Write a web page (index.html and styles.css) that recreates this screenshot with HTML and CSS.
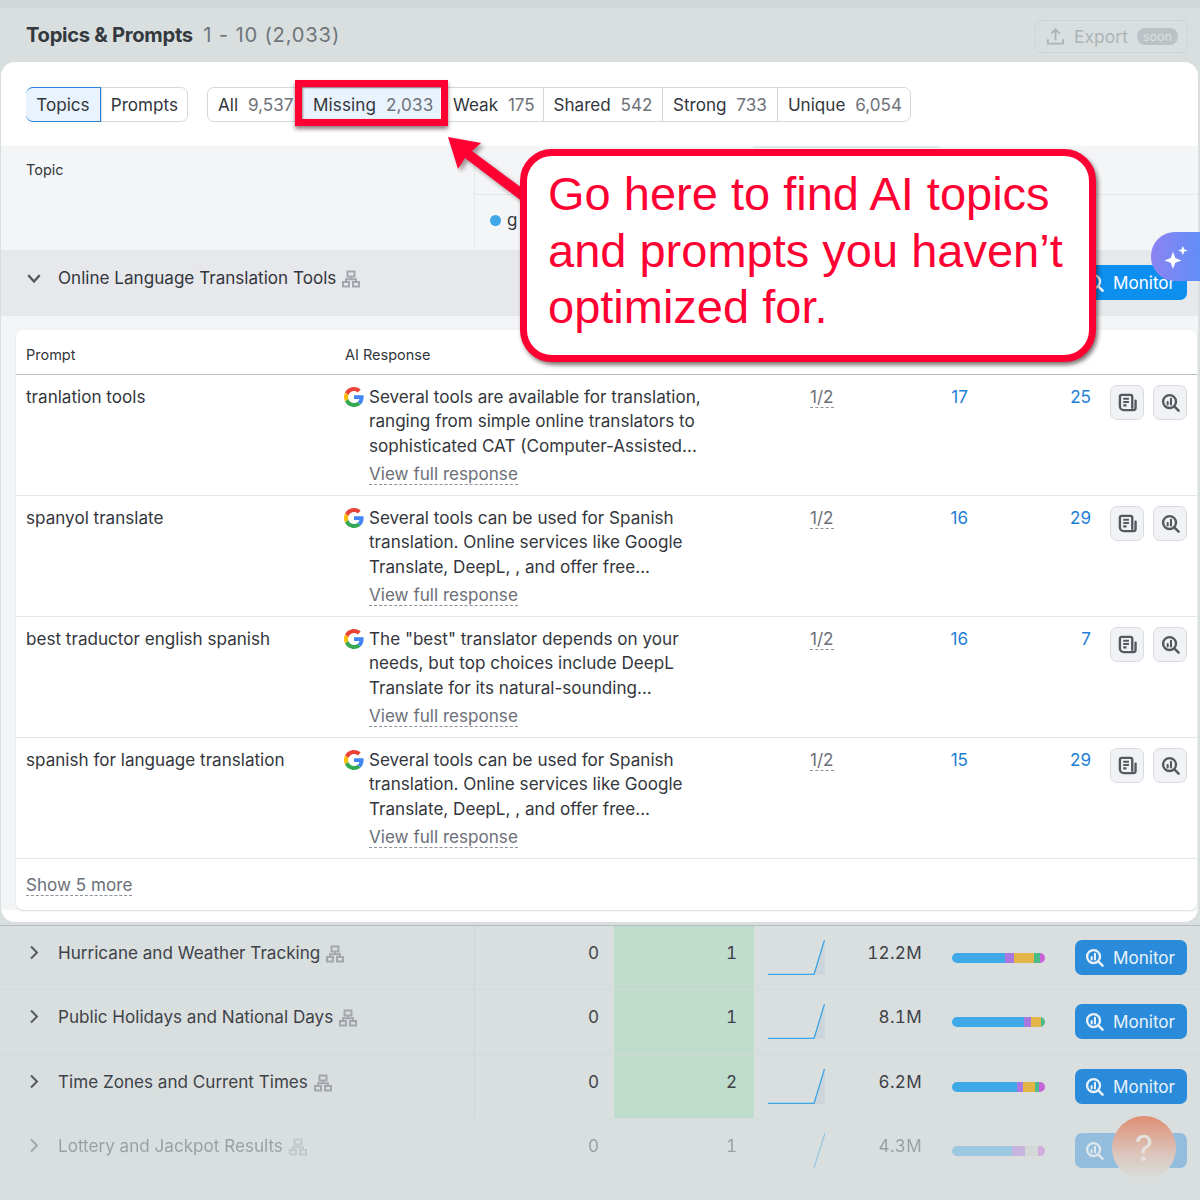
FILE: index.html
```html
<!DOCTYPE html>
<html lang="en">
<head>
<meta charset="utf-8">
<title>Topics &amp; Prompts</title>
<link rel="stylesheet" href="styles.css">
</head>
<body>
<svg class="defs" width="0" height="0" aria-hidden="true">
  <symbol id="tree" viewBox="0 0 18 18"><path d="M5.500 1.500h7v5h-7zM1 12h6v4.500H1zM11 12h6v4.500h-6zM4 12V9.300h10V12M9 6.500v2.800" fill="none" stroke="currentColor" stroke-width="2"/></symbol>
  <symbol id="mon" viewBox="0 0 20 20"><circle cx="9" cy="9" r="6.800" fill="none" stroke="currentColor" stroke-width="2.500"/><path d="M14 14l4.500 4.500" stroke="currentColor" stroke-width="2.600" stroke-linecap="round"/><path d="M7 9.500v2.500M10.500 6v6" stroke="currentColor" stroke-width="2.200" stroke-linecap="round"/></symbol>
  <symbol id="doc" viewBox="0 0 20 20"><path d="M15 15.500V4a2 2 0 0 0-2-2H4a2 2 0 0 0-2 2v10a4 4 0 0 0 4 4h10a2.500 2.500 0 0 0 2.500-2.500V8" fill="none" stroke="currentColor" stroke-width="2.500" stroke-linecap="round"/><path d="M5.500 6h6M5.500 9.500h6M5.500 13h3.500" stroke="currentColor" stroke-width="2.200"/></symbol>
  <symbol id="goog" viewBox="0 0 48 48"><path fill="#EA4335" d="M24 9.500c3.500 0 6.700 1.200 9.200 3.600l6.900-6.900C35.900 2.400 30.500 0 24 0 14.600 0 6.500 5.400 2.600 13.200l8 6.200C12.500 13.700 17.800 9.500 24 9.500z"/><path fill="#4285F4" d="M47 24.500c0-1.600-.1-3.100-.4-4.500H24v9h12.900c-.6 3-2.200 5.500-4.700 7.200l7.700 6C44.400 38 47 31.800 47 24.500z"/><path fill="#FBBC05" d="M10.500 28.600c-.5-1.400-.8-3-.8-4.600s.3-3.200.8-4.600l-8-6.200C.9 16.400 0 20.100 0 24s.9 7.600 2.600 10.800l7.900-6.200z"/><path fill="#34A853" d="M24 48c6.500 0 11.900-2.100 15.900-5.800l-7.700-6c-2.200 1.500-4.900 2.300-8.200 2.300-6.200 0-11.500-4.200-13.400-9.900l-8 6.200C6.500 42.600 14.600 48 24 48z"/></symbol>
  <symbol id="right" viewBox="0 0 16 16"><path d="M5 1.500l6 6-6 6" fill="none" stroke="currentColor" stroke-width="2"/></symbol>
</svg>

<div class="page">
  <header class="topbar">
    <h1 class="title">Topics &amp; Prompts <span class="range">1 - 10 (2,033)</span></h1>
    <div class="export">
      <svg class="export-icon" viewBox="0 0 20 20"><path d="M10 14V3M5.500 7L10 2.500 14.500 7M2 13v4.500h16V13" fill="none" stroke="currentColor" stroke-width="2"/></svg>
      <span>Export</span><span class="soon">soon</span>
    </div>
  </header>

  <main class="panel">
    <div class="filters">
      <div class="seg seg-a">
        <span class="seg-item seg-active">Topics</span>
        <span class="seg-item">Prompts</span>
      </div>
      <div class="seg seg-b">
        <span class="seg-item w-all">All <em>9,537</em></span>
        <span class="seg-item w-missing">Missing <em>2,033</em></span>
        <span class="seg-item w-weak">Weak <em>175</em></span>
        <span class="seg-item w-shared">Shared <em>542</em></span>
        <span class="seg-item w-strong">Strong <em>733</em></span>
        <span class="seg-item w-unique">Unique <em>6,054</em></span>
      </div>
    </div>

    <div class="thead">
      <div class="th-topic">Topic</div>
      <div class="th-rest">
        <div class="th-top"><div class="th-tab"></div></div>
        <div class="th-legend"><i class="dot"></i>g</div>
      </div>
    </div>

    <div class="open-row">
      <svg class="chev" viewBox="0 0 14 14"><path d="M2 4.500L7 10l5-5.500" fill="none" stroke="currentColor" stroke-width="2"/></svg>
      <span class="topic-name">Online Language Translation Tools</span>
      <svg class="tree"><use href="#tree"/></svg>
      <span class="monitor monitor-bright"><svg class="mon-icon"><use href="#mon"/></svg>Monitor</span>
    </div>

    <div class="inner-wrap">
      <section class="inner">
        <div class="p-row p-head">
          <div>Prompt</div><div>AI Response</div>
        </div>

        <div class="p-row">
          <div>tranlation tools</div>
          <div class="resp"><svg class="g"><use href="#goog"/></svg><div><p>Several tools are available for translation, ranging from simple online translators to sophisticated CAT (Computer-Assisted...</p><a class="view">View full response</a></div></div>
          <div><span class="ratio">1/2</span></div>
          <div class="num">17</div>
          <div class="num">25</div>
          <div class="acts"><span class="act"><svg><use href="#doc"/></svg></span><span class="act"><svg><use href="#mon"/></svg></span></div>
        </div>

        <div class="p-row">
          <div>spanyol translate</div>
          <div class="resp"><svg class="g"><use href="#goog"/></svg><div><p>Several tools can be used for Spanish translation. Online services like Google Translate, DeepL, , and offer free...</p><a class="view">View full response</a></div></div>
          <div><span class="ratio">1/2</span></div>
          <div class="num">16</div>
          <div class="num">29</div>
          <div class="acts"><span class="act"><svg><use href="#doc"/></svg></span><span class="act"><svg><use href="#mon"/></svg></span></div>
        </div>

        <div class="p-row">
          <div>best traductor english spanish</div>
          <div class="resp"><svg class="g"><use href="#goog"/></svg><div><p>The "best" translator depends on your needs, but top choices include DeepL Translate for its natural-sounding...</p><a class="view">View full response</a></div></div>
          <div><span class="ratio">1/2</span></div>
          <div class="num">16</div>
          <div class="num">7</div>
          <div class="acts"><span class="act"><svg><use href="#doc"/></svg></span><span class="act"><svg><use href="#mon"/></svg></span></div>
        </div>

        <div class="p-row">
          <div>spanish for language translation</div>
          <div class="resp"><svg class="g"><use href="#goog"/></svg><div><p>Several tools can be used for Spanish translation. Online services like Google Translate, DeepL, , and offer free...</p><a class="view">View full response</a></div></div>
          <div><span class="ratio">1/2</span></div>
          <div class="num">15</div>
          <div class="num">29</div>
          <div class="acts"><span class="act"><svg><use href="#doc"/></svg></span><span class="act"><svg><use href="#mon"/></svg></span></div>
        </div>

        <div class="show-more"><a class="view">Show 5 more</a></div>
      </section>
    </div>
  </main>

  <section class="rows">
    <div class="t-row">
      <div class="t-topic"><svg class="chev"><use href="#right"/></svg><span class="topic-name">Hurricane and Weather Tracking</span><svg class="tree"><use href="#tree"/></svg></div>
      <div class="t-val">0</div>
      <div class="t-val t-green">1</div>
      <div class="t-spark"><svg viewBox="0 0 57 35"><path d="M46 35L57 0v35z" fill="#ccd5db"/><path d="M0 34.500h46L56.500 0" fill="none" stroke="#3ba3e6" stroke-width="1.300"/></svg></div>
      <div class="t-vol">12.2M</div>
      <div class="t-bar"><div class="bar"><i class="b1" style="width:57%"></i><i class="b2" style="width:10%"></i><i class="b3" style="width:21%"></i><i class="b4" style="width:7%"></i><i class="b5" style="width:5%"></i></div></div>
      <div><span class="monitor"><svg class="mon-icon"><use href="#mon"/></svg>Monitor</span></div>
    </div>
    <div class="t-row">
      <div class="t-topic"><svg class="chev"><use href="#right"/></svg><span class="topic-name">Public Holidays and National Days</span><svg class="tree"><use href="#tree"/></svg></div>
      <div class="t-val">0</div>
      <div class="t-val t-green">1</div>
      <div class="t-spark"><svg viewBox="0 0 57 35"><path d="M46 35L57 0v35z" fill="#ccd5db"/><path d="M0 34.500h46L56.500 0" fill="none" stroke="#3ba3e6" stroke-width="1.300"/></svg></div>
      <div class="t-vol">8.1M</div>
      <div class="t-bar"><div class="bar"><i class="b1" style="width:77%"></i><i class="b2" style="width:8%"></i><i class="b3" style="width:11%"></i><i class="b4" style="width:4%"></i></div></div>
      <div><span class="monitor"><svg class="mon-icon"><use href="#mon"/></svg>Monitor</span></div>
    </div>
    <div class="t-row">
      <div class="t-topic"><svg class="chev"><use href="#right"/></svg><span class="topic-name">Time Zones and Current Times</span><svg class="tree"><use href="#tree"/></svg></div>
      <div class="t-val">0</div>
      <div class="t-val t-green">2</div>
      <div class="t-spark"><svg viewBox="0 0 57 35"><path d="M46 35L57 0v35z" fill="#ccd5db"/><path d="M0 34.500h46L56.500 0" fill="none" stroke="#3ba3e6" stroke-width="1.300"/></svg></div>
      <div class="t-vol">6.2M</div>
      <div class="t-bar"><div class="bar"><i class="b1" style="width:70%"></i><i class="b2" style="width:6%"></i><i class="b3" style="width:13%"></i><i class="b4" style="width:5%"></i><i class="b5" style="width:6%"></i></div></div>
      <div><span class="monitor"><svg class="mon-icon"><use href="#mon"/></svg>Monitor</span></div>
    </div>
    <div class="t-row t-faded">
      <div class="t-topic"><svg class="chev"><use href="#right"/></svg><span class="topic-name">Lottery and Jackpot Results</span><svg class="tree"><use href="#tree"/></svg></div>
      <div class="t-val">0</div>
      <div class="t-val t-plain">1</div>
      <div class="t-spark"><svg viewBox="0 0 57 35"><path d="M46 35L57 0" fill="none" stroke="#3ba3e6" stroke-width="1.300"/></svg></div>
      <div class="t-vol">4.3M</div>
      <div class="t-bar"><div class="bar"><i class="b1" style="width:64%"></i><i class="b2" style="width:14%"></i><i class="b6" style="width:15%"></i><i class="b5" style="width:7%"></i></div></div>
      <div><span class="monitor"><svg class="mon-icon"><use href="#mon"/></svg>Monitor</span></div>
    </div>
  </section>

  <div class="highlight"></div>
  <svg class="arrow" viewBox="0 0 90 70"><path d="M2 2l33 6-9 8 62 46-7 8-62-47-7 11z" fill="#ff0033"/></svg>
  <div class="callout">Go here to find AI topics and prompts you haven’t optimized for.</div>
  <div class="ai-fab"><svg viewBox="0 0 28 28"><path d="M10.500 8l2.700 7.300 7.300 2.700-7.300 2.700L10.500 28l-2.700-7.300L.5 18l7.300-2.700zM22 1l1.500 4 4 1.500-4 1.500-1.500 4-1.500-4-4-1.500 4-1.500z" fill="#fff"/></svg></div>
  <div class="help-fab">?</div>
</div>
</body>
</html>
```
FILE: styles.css
```css
* { box-sizing: border-box; }
html, body { margin: 0; padding: 0; }
body { font-family: Inter, "Liberation Sans", sans-serif; color: #33363c; font-size: 17.1px; }
.defs { position: absolute; }
.page { position: relative; width: 1200px; height: 1200px; overflow: hidden; background: #d9dfdf; padding-top: 8px; }
.page::before { content: ""; position: absolute; inset: 0 0 auto 0; height: 8px; background: #d2d8da; }

.topbar { height: 54px; display: flex; align-items: center; justify-content: space-between; padding: 0 12px 0 26px; }
.title { margin: 0 0 2px; font-size: 20.2px; font-weight: 700; letter-spacing: -0.3px; color: #34393e; }
.range { font-weight: 400; color: #6f757b; margin-left: 6px; letter-spacing: 0.8px; }
.export { width: 153px; height: 33px; border: 1px solid #cfd5d7; border-radius: 6px; display: flex; align-items: center; padding-left: 10px; color: #adb4b8; font-size: 17.5px; gap: 9px; margin-top: 2px; }
.export-icon { width: 19px; height: 19px; }
.soon { background: #bcc3c7; color: #d9dfdf; font-size: 12.500px; border-radius: 8px; padding: 1px 6px; }

.panel { background: #fff; margin: 0 2px 3px 1px; height: 860px; border-radius: 14px; overflow: hidden; }
.filters { height: 84px; display: flex; align-items: flex-start; padding: 25px 0 0 25px; gap: 19px; }
.seg { display: flex; height: 35px; border: 1px solid #d5d7dc; border-radius: 7px; }
.seg-item { display: flex; align-items: center; justify-content: center; padding: 0 10px; white-space: pre; border-left: 1px solid #d5d7dc; }
.seg-item:first-child { border-left: 0; }
.seg-a { width: 162px; }
.seg-a .seg-item:first-child { width: 75px; }
.seg-a .seg-item:last-child { flex: 1; justify-content: flex-start; padding: 0 9px; }
.seg-active { background: #e9f3fd; border: 1px solid #2b85d8; border-radius: 7px 0 0 7px; margin: -1px 0 -1px -1px; }
.seg-b { width: 704px; }
.seg-item em { font-style: normal; color: #6f7279; margin-left: 5px; }
.w-all { width: 95px; justify-content: flex-start; }
.w-missing { width: 137px; border-left: 0; background: #e9f3fd; justify-content: flex-start; padding-left: 10px; letter-spacing: 0.1px; }
.w-weak { width: 103px; border-left: 0; padding-left: 13px; justify-content: flex-start; }
.w-shared { width: 119px; }
.w-strong { width: 115px; }
.w-unique { flex: 1; padding-right: 12px; }

.thead { height: 104px; background: #f4f5f7; display: flex; font-size: 14.5px; }
.th-topic { width: 474px; padding: 15px 0 0 25px; border-right: 1px solid #e6e7ea; }
.th-rest { flex: 1; }
.th-top { height: 49px; border-bottom: 1px solid #e6e7ea; }
.th-tab { width: 187px; height: 2px; margin-left: 278px; background: #e3e5e8; }
.th-legend { display: flex; align-items: center; padding: 15px 0 0 15px; gap: 6px; font-size: 17px; }
.dot { width: 11px; height: 11px; border-radius: 50%; background: #3fa9e8; }

.open-row { position: relative; height: 66px; background: #e6e8ec; display: flex; align-items: flex-start; padding: 16px 0 0 25px; }
.chev { width: 16px; height: 16px; flex: none; color: #55595f; margin-top: 4px; }
.topic-name { margin-left: 16px; line-height: 24px; white-space: nowrap; }
.tree { width: 18px; height: 18px; flex: none; margin: 4px 0 0 6px; color: #a3a7ad; }
.monitor { display: inline-flex; align-items: center; width: 112px; height: 35px; border-radius: 7px; background: #2a8bdb; color: #e9f2f8; padding-left: 10px; gap: 9px; }
.monitor-bright { position: absolute; left: 1074px; top: 15px; background: #0d8ff0; color: #fff; }
.mon-icon { width: 19px; height: 19px; flex: none; }

.inner-wrap { height: 594px; background: #f4f5f7; padding: 14px 1px 0 15px; }
.inner { background: #fff; height: 580px; border-radius: 7px; box-shadow: 0 1px 2px #d5d8dc; }
.p-row { display: grid; grid-template-columns: 319px 465px 60px 98px 123px 96px; height: 121px; padding: 10px 10px 0 10px; border-bottom: 1px solid #e6e7ea; line-height: 24.3px; }
.p-head { height: 45px; padding-top: 13px; font-size: 14.5px; border-bottom-color: #b9bbc2; }
.resp { display: flex; gap: 5px; margin-left: -1px; }
.resp p { margin: 0; width: 340px; }
.g { width: 20px; height: 20px; flex: none; margin-top: 2px; }
.view { display: inline-block; margin-top: 5px; color: #6c6f78; border-bottom: 1px dashed #8e9199; line-height: 21px; }
.ratio { color: #6c6f78; border-bottom: 1px dashed #8e9199; display: inline-block; line-height: 21px; }
.num { text-align: right; color: #1f7fd6; }
.acts { display: flex; justify-content: flex-end; gap: 9px; }
.act { width: 34px; height: 35px; background: #f1f2f5; border: 1px solid #d9dbdf; border-radius: 7px; display: flex; align-items: center; justify-content: center; color: #55585e; }
.act svg { width: 19px; height: 19px; }
.show-more { padding: 15px 10px 0; }
.show-more .view { margin-top: 0; }

.rows { border-top: 1px solid #b4bcc0; }
.t-row { display: grid; grid-template-columns: 475px 139px 140px 84px 84px 153px 125px; height: 64.4px; border-bottom: 1px solid #d3d9da; color: #3e4248; }
.t-row:nth-child(3) { border-bottom-color: #d6dcdd; }
.t-topic { display: flex; align-items: flex-start; padding: 15px 0 0 26px; border-right: 1px solid #d0d6d8; }
.t-val { text-align: right; padding: 15px 15px 0 0; line-height: 24px; font-variant-numeric: tabular-nums; }
.t-green { background: #c0dccd; padding-right: 17px; }
.t-plain { padding-right: 17px; }
.t-spark { padding: 14px 0 0 14px; }
.t-spark svg { width: 57px; height: 35px; display: block; }
.t-vol { text-align: right; padding-top: 15px; line-height: 24px; font-variant-numeric: tabular-nums; letter-spacing: 0.3px; }
.t-bar { padding: 27px 0 0 30px; }
.bar { display: flex; width: 93px; height: 10px; border-radius: 5px; overflow: hidden; }
.bar i { display: block; height: 10px; }
.b1 { background: #3fa9e8; }
.b2 { background: #a977e0; }
.b3 { background: #e2b546; }
.b4 { background: #4cbb8b; }
.b5 { background: #c565d8; }
.b6 { background: #c9cfc8; }
.t-row > div:last-child { padding-top: 14px; }
.t-faded { opacity: 0.4; border-bottom: 0; }
.t-faded .t-topic { border-right: 0; }

.highlight { position: absolute; left: 295px; top: 80px; width: 153px; height: 46px; border: 7px solid #ff0033; box-shadow: 0 3px 4px rgba(60, 20, 30, 0.55), inset 1px 1px 2px rgba(60, 20, 30, 0.5); }
.arrow { position: absolute; left: 446px; top: 135px; width: 90px; height: 70px; filter: drop-shadow(3px 3px 2px rgba(60, 30, 30, 0.45)); }
.callout { position: absolute; left: 520px; top: 149px; width: 576px; height: 213px; background: #fff; border: 7px solid #ff0033; border-radius: 32px; box-shadow: 2px 3px 4px rgba(40, 20, 20, 0.6); color: #ff0033; font-family: "Liberation Sans", Arial, sans-serif; font-size: 47px; line-height: 56.5px; padding: 10px 18px 0 21px; }
.ai-fab { position: absolute; left: 1151px; top: 232px; width: 60px; height: 49px; border-radius: 24px 0 0 24px; background: linear-gradient(90deg, #8a84f2, #5b8ff8); display: flex; align-items: center; padding-left: 13px; }
.ai-fab svg { width: 24px; height: 24px; }
.help-fab { position: absolute; left: 1112px; top: 1116px; width: 64px; height: 64px; border-radius: 50%; background: linear-gradient(180deg, #de8e73, #dcc6bc 60%, #d9dfdf); color: #e3e2de; font-size: 36px; display: flex; align-items: center; justify-content: center; }
```
